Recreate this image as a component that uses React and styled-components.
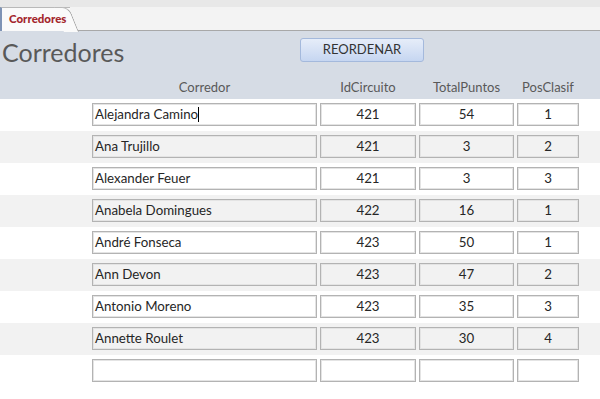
import styled, { createGlobalStyle } from 'styled-components'

const GlobalStyle = createGlobalStyle`
	html, body {
	margin: 0;
	padding: 0;
	background: #FFFFFF;
	font-family: Lato, "Open Sans", "Liberation Sans", sans-serif;
	}
`;

const Page = styled.div`
	width: 600px;
	height: 399px;
	overflow: hidden;
	background: #FFFFFF;
`;

const TabStrip = styled.div`
	height: 31px;
	background: #F3F3F3;
	border-top: 7px solid #E8E8E8;
	box-sizing: border-box;
	display: flex;
	align-items: flex-end;
	position: relative;
	&::after{
	content: '';
	position: absolute;
	left: 78px;
	right: 0;
	bottom: 0;
	height: 1px;
	background: #A8A8A8;
	}
`;

const Tab = styled.div`
	position: relative;
	height: 24px;
	width: 70px;
	box-sizing: border-box;
	background: #FAFAFA;
	border-top: 1px solid #B9B9B9;
	border-left: 2px solid #7E93B5;
	padding-left: 7px;
	font-size: 11.5px;
	font-weight: 900;
	color: #A4262C;
	line-height: 22px;
	&::after{
	content: '';
	position: absolute;
	top: -1px;
	right: -9px;
	width: 14px;
	height: 24px;
	background: #FAFAFA;
	border-top: 1px solid #B9B9B9;
	border-right: 1px solid #9C9C9C;
	border-top-right-radius: 7px;
	transform: skewX(22deg);
	transform-origin: bottom left;
	}
`;

const TabLabel = styled.span`
	position: relative;
	z-index: 1;
`;

const Header = styled.div`
	height: 68px;
	background: #D6DCE5;
	display: flex;
	flex-direction: column;
`;

const TitleLine = styled.div`
	height: 44px;
	display: flex;
	align-items: flex-start;
`;

const Title = styled.div`
	width: 298px;
	padding-left: 2px;
	margin-top: 6px;
	font-size: 25px;
	line-height: 30px;
	color: #595959;
`;

const Button = styled.button`
	margin-top: 7px;
	width: 124px;
	height: 24px;
	border: 1px solid #A4B9DC;
	border-radius: 3px;
	background: linear-gradient(#E6EDF9, #C6D6F1);
	font-family: inherit;
	font-size: 13px;
	color: #333333;
	padding: 0;
	padding-bottom: 2px;
`;

const Grid = styled.div`
	display: grid;
	grid-template-columns: 225px 96px 95px 62px;
	column-gap: 3px;
	padding-left: 92px;
`;

const LabelRow = styled(Grid)`
	height: 24px;
	align-items: center;
	font-size: 13px;
	color: #595959;
	text-align: center;
`;

const Row = styled(Grid)`
	height: 32px;
	box-sizing: border-box;
	padding-top: 4px;
	background: ${p => p.$alt ? '#F2F2F2' : '#FFFFFF'};
`;

const Field = styled.div`
	height: 23px;
	box-sizing: border-box;
	border: 1px solid #B3B3B3;
	box-shadow: inset 0 0 0 1px #E4E4E4;
	background: ${p => p.$alt ? '#F2F2F2' : '#FFFFFF'};
	font-size: 13.3px;
	line-height: 21px;
	color: #262626;
	padding: 0 2px;
	text-align: ${p => p.$num ? 'center' : 'left'};
	white-space: nowrap;
	overflow: hidden;
`;

const Caret = styled.span`
	display: inline-block;
	width: 1px;
	height: 15px;
	background: #000000;
	vertical-align: -3px;
`;

const corredores = [
	['Alejandra Camino', 421, 54, 1],
	['Ana Trujillo', 421, 3, 2],
	['Alexander Feuer', 421, 3, 3],
	['Anabela Domingues', 422, 16, 1],
	['André Fonseca', 423, 50, 1],
	['Ann Devon', 423, 47, 2],
	['Antonio Moreno', 423, 35, 3],
	['Annette Roulet', 423, 30, 4],
];

const App = () => {
	return (
		<Page>
			<GlobalStyle />
			<TabStrip>
				<Tab><TabLabel>Corredores</TabLabel></Tab>
			</TabStrip>
			<Header>
				<TitleLine>
					<Title>Corredores</Title>
					<Button>REORDENAR</Button>
				</TitleLine>
				<LabelRow>
					<div>Corredor</div>
					<div>IdCircuito</div>
					<div>TotalPuntos</div>
					<div>PosClasif</div>
				</LabelRow>
			</Header>

			{corredores.map(([nombre, circuito, puntos, pos], i) => (
				<Row key={nombre} $alt={i % 2 === 1}>
					<Field $alt={i % 2 === 1}>{nombre}{i === 0 && <Caret />}</Field>
					<Field $alt={i % 2 === 1} $num>{circuito}</Field>
					<Field $alt={i % 2 === 1} $num>{puntos}</Field>
					<Field $alt={i % 2 === 1} $num>{pos}</Field>
				</Row>
			))}
			<Row>
				<Field />
				<Field $num />
				<Field $num />
				<Field $num />
			</Row>
		</Page>
	)
}

export default App
